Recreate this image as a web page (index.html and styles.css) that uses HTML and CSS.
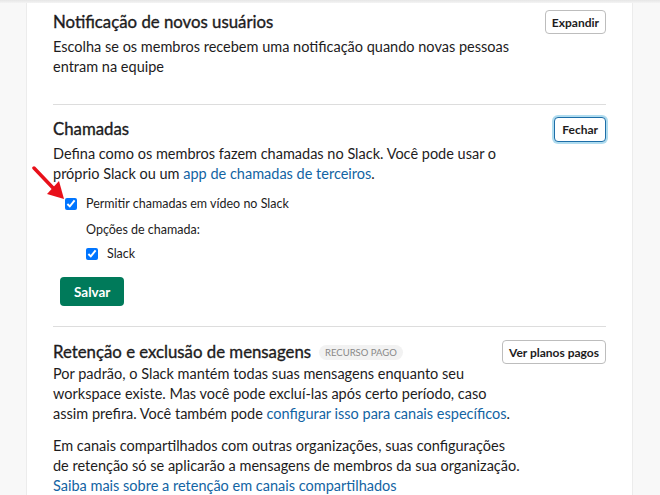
FILE: index.html
```html
<!DOCTYPE html>
<html>
<head>
    <title>Configurações do workspace</title>
    <link rel="stylesheet" href="styles.css">
</head>
<body>
    <div class="topshade"></div>
    <div class="page">
        <div class="card">
            <div class="section first">
                <div class="section-head">
                    <h2>Notificação de novos usuários</h2>
                    <button class="btn">Expandir</button>
                </div>
                <p>Escolha se os membros recebem uma notificação quando novas pessoas<br>entram na equipe</p>
            </div>

            <div class="section">
                <div class="section-head">
                    <h2>Chamadas</h2>
                    <button class="btn focused">Fechar</button>
                </div>
                <p>Defina como os membros fazem chamadas no Slack. Você pode usar o<br>próprio Slack ou um <a href="#">app de chamadas de terceiros</a>.</p>
                <label class="check main-check"><input type="checkbox" checked> Permitir chamadas em vídeo no Slack</label>
                <div class="sub-label">Opções de chamada:</div>
                <label class="check sub-check"><input type="checkbox" checked> Slack</label>
                <button class="btn-save">Salvar</button>
            </div>

            <div class="section last">
                <div class="section-head">
                    <h2>Retenção e exclusão de mensagens <span class="badge">RECURSO PAGO</span></h2>
                    <button class="btn">Ver planos pagos</button>
                </div>
                <p class="flush">Por padrão, o Slack mantém todas suas mensagens enquanto seu<br>workspace existe. Mas você pode excluí-las após certo período, caso<br>assim prefira. Você também pode <a href="#">configurar isso para canais específicos</a>.</p>
                <p class="gap">Em canais compartilhados com outras organizações, suas configurações<br>de retenção só se aplicarão a mensagens de membros da sua organização.<br><a href="#">Saiba mais sobre a retenção em canais compartilhados</a></p>
            </div>
        </div>
    </div>

    <!-- seta vermelha de destaque -->
    <svg class="arrow" width="40" height="40" viewBox="0 0 40 40">
        <line x1="2" y1="2" x2="23" y2="24" stroke="#e8101a" stroke-width="3.5" stroke-linecap="round"/>
        <polygon points="32,33 15,28 27,15" fill="#e8101a"/>
    </svg>
</body>
</html>
```

FILE: styles.css
```css
body { margin: 0; background: #f8f8f8; font-family: Lato, "Open Sans", sans-serif; color: #1d1c1d; position: relative; }
.topshade { height: 3px; background: linear-gradient(#e6e6e6, #f4f4f4); }
.page { padding-left: 27px; }
.card { width: 553px; padding: 0 26px; background: #fff; box-shadow: 1px 0 0 #ececec, -1px 0 0 #ececec; min-height: 500px; }
.section { padding: 12px 0 20px; border-bottom: 1px solid #dddddd; }
.section.first { padding-top: 7px; padding-bottom: 27px; }
.section.last { border-bottom: none; padding-top: 13px; }
.section-head { display: flex; justify-content: space-between; align-items: center; height: 24px; }
h2 { margin: 0; font-size: 16.8px; line-height: 24px; font-weight: 400; display: flex; align-items: center; -webkit-text-stroke: 0.35px #1d1c1d; }
p { margin: 3px 0 0; font-size: 14.5px; line-height: 20px; white-space: nowrap; }
p.flush { margin-top: 0; }
p.gap { margin-top: 12px; }
a { color: #1264a3; text-decoration: none; }
.btn { font-family: inherit; font-size: 12px; font-weight: 700; color: #1d1c1d; background: #fff; border: 1px solid #bdbdbd; border-radius: 4px; height: 24px; padding: 0 6px; }
.btn.focused { border-color: #1d6ea8; box-shadow: 0 0 0 2px rgba(29, 155, 209, 0.35); height: 25px; padding: 0 7px; }
.check { display: flex; align-items: center; font-size: 12.5px; line-height: 20px; }
.check input { margin: 0 9px 0 0; width: 12px; height: 12px; }
.main-check { margin: 10px 0 0 12px; }
.sub-label { margin: 6px 0 0 33px; font-size: 12.5px; line-height: 20px; }
.sub-check { margin: 4px 0 0 33px; }
.btn-save { margin: 13px 0 0 7px; font-family: inherit; font-size: 13.5px; font-weight: 700; color: #fff; background: #007a5a; border: none; border-radius: 4px; height: 29px; padding: 0 14px; }
.badge { margin-left: 8px; font-size: 9.5px; font-weight: 400; color: #888; background: #f2f2f2; border-radius: 8px; padding: 0 6px; line-height: 15px; -webkit-text-stroke: 0; }
.arrow { position: absolute; left: 32px; top: 166px; }
```
